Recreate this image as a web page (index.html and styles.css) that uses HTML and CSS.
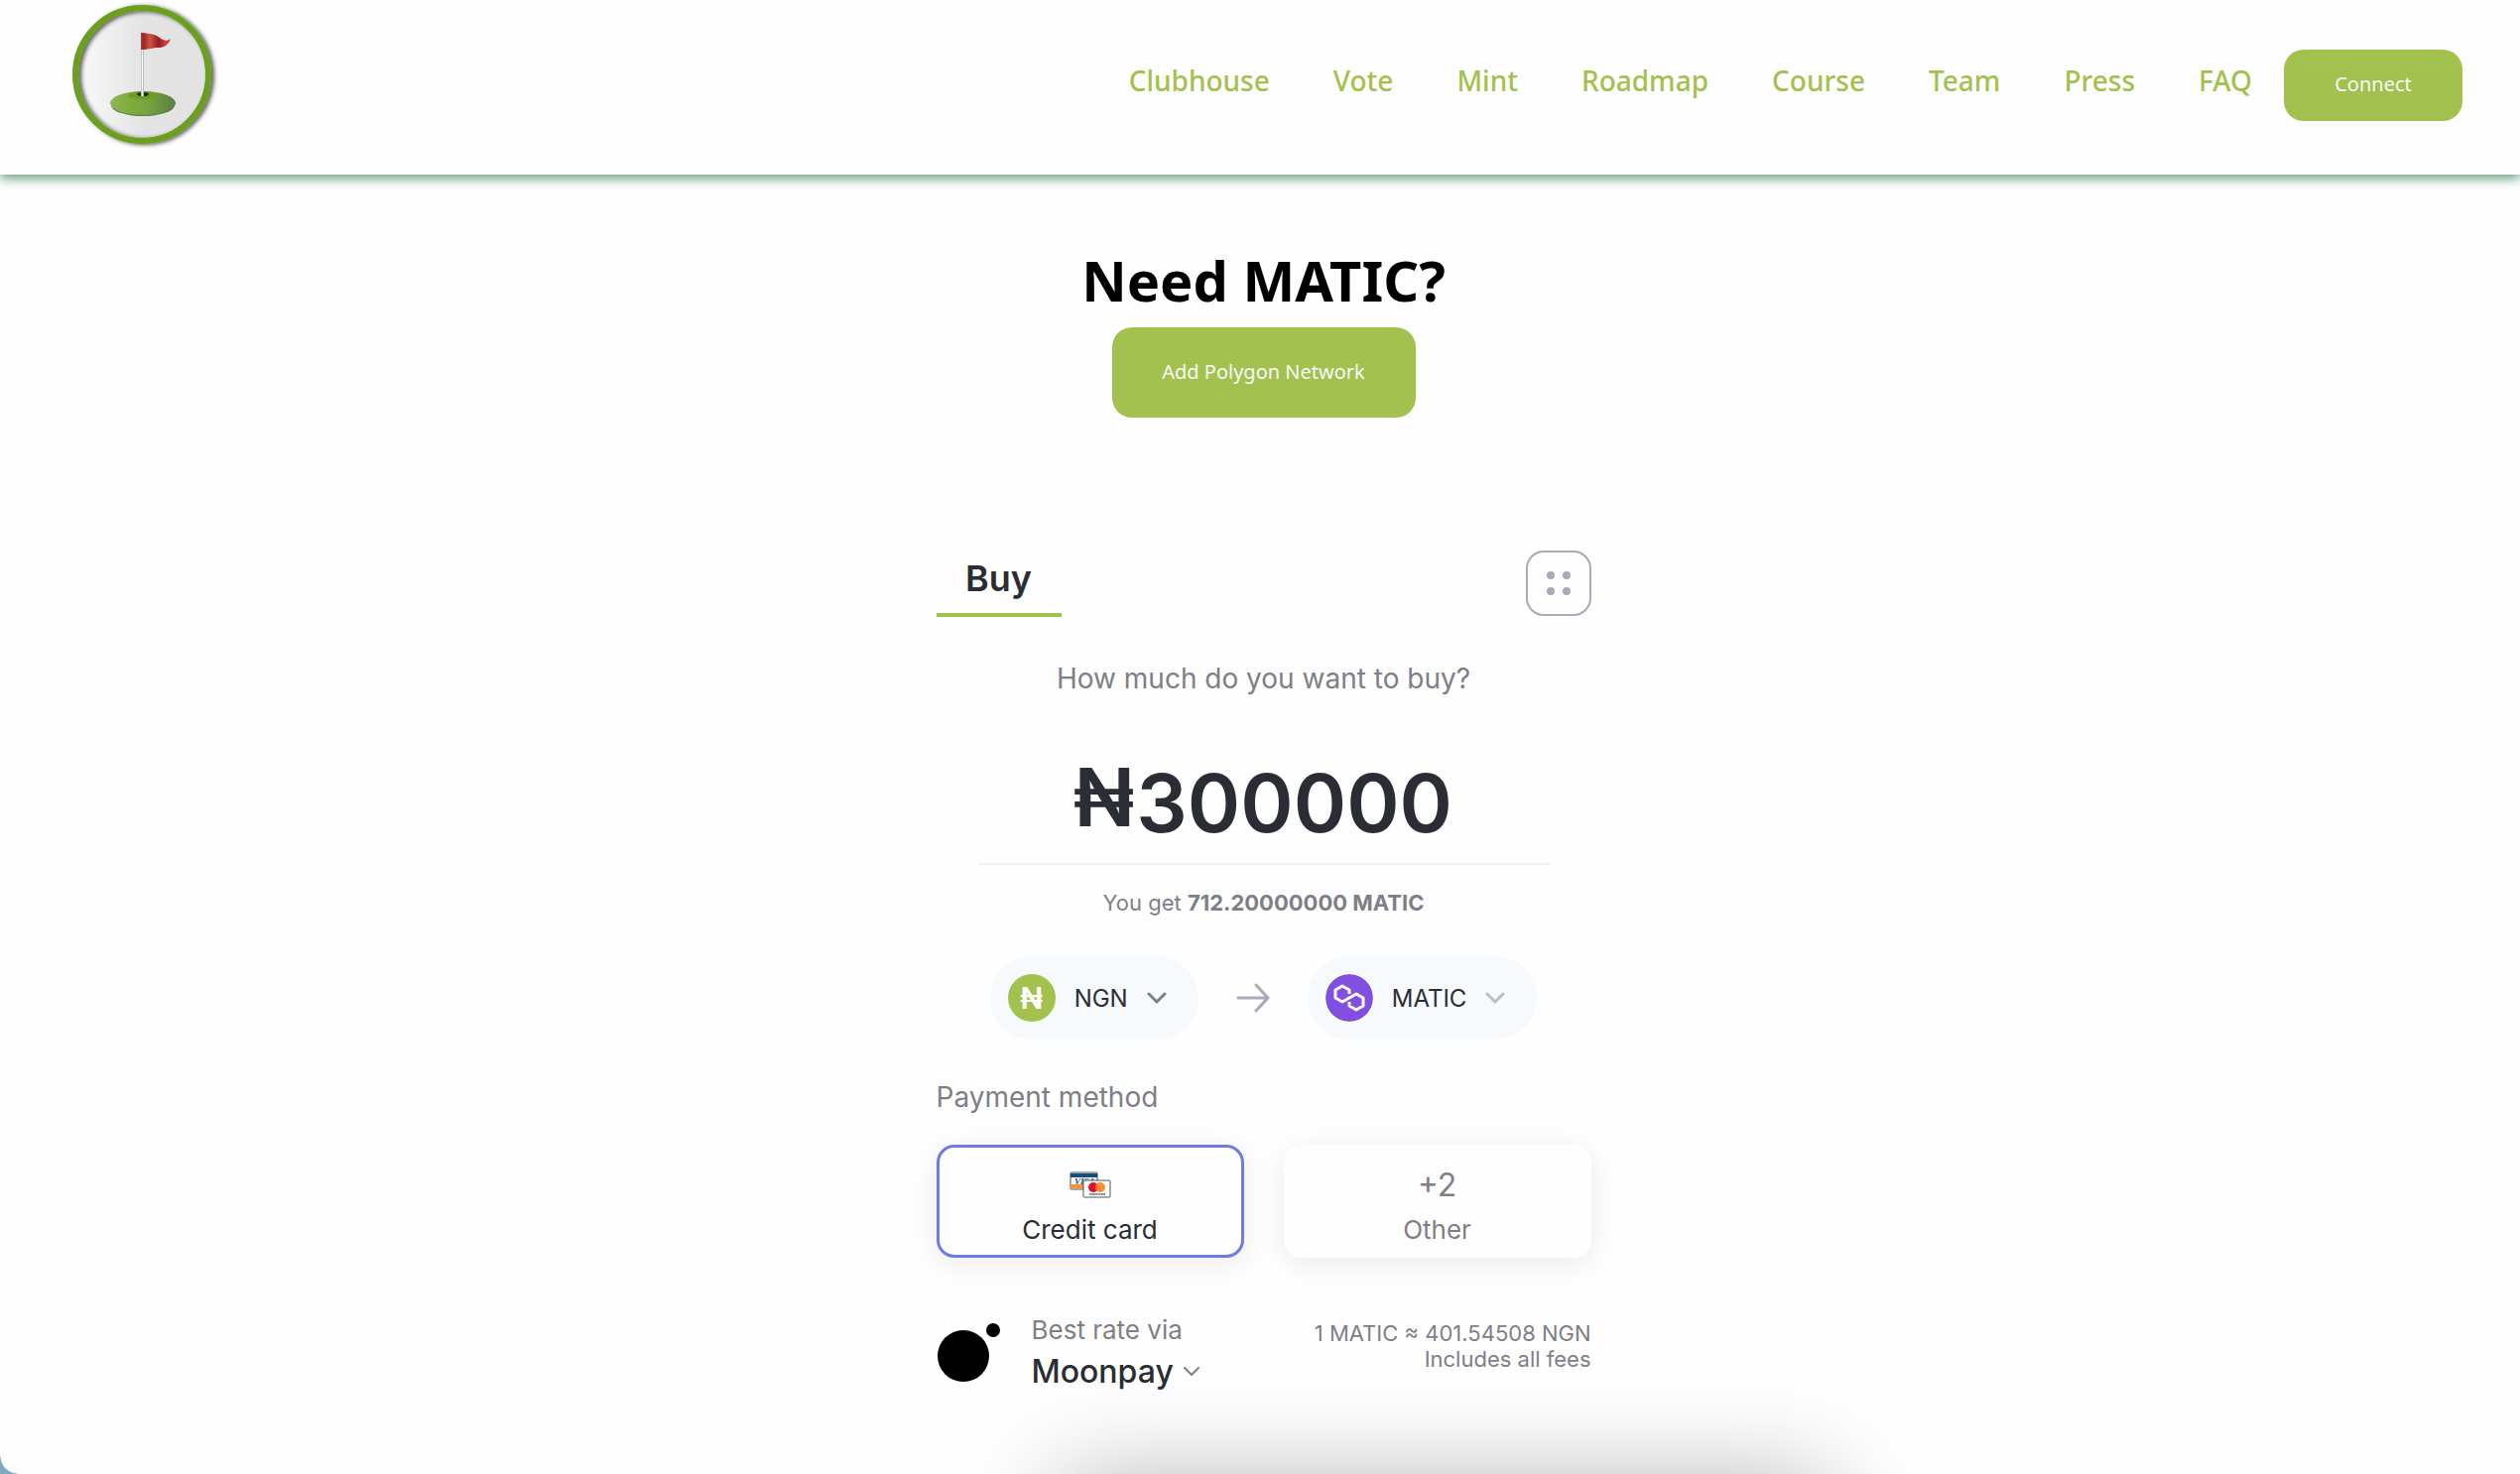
FILE: index.html
```html
<!DOCTYPE html>
<html lang="en">
<head>
  <meta charset="utf-8">
  <title>Need MATIC?</title>
  <link rel="stylesheet" href="styles.css">
</head>
<body>
  <header class="navbar">
    <a href="#" class="logo" aria-label="Home">
      <svg width="160" height="160" viewBox="0 0 160 160">
        <defs>
          <linearGradient id="bg"><stop offset="0" stop-color="#fafafa"/><stop offset=".5" stop-color="#e4e4e4"/><stop offset="1" stop-color="#e3e3e3"/></linearGradient>
          <linearGradient id="green"><stop offset="0" stop-color="#8fb85a"/><stop offset=".3" stop-color="#80ab3c"/><stop offset=".55" stop-color="#7aa53c"/><stop offset="1" stop-color="#587f48"/></linearGradient>
          <linearGradient id="flag"><stop offset="0" stop-color="#b8392f"/><stop offset=".1" stop-color="#932a25"/><stop offset=".3" stop-color="#cf5440"/><stop offset=".6" stop-color="#8f2028"/><stop offset=".85" stop-color="#dc4038"/><stop offset="1" stop-color="#b8332f"/></linearGradient>
          <linearGradient id="pole"><stop offset="0" stop-color="#aaa"/><stop offset=".5" stop-color="#fff"/><stop offset="1" stop-color="#999"/></linearGradient>
          <filter id="drop" x="-20%" y="-20%" width="140%" height="140%"><feDropShadow dx="3" dy="1" stdDeviation="2" flood-color="#000" flood-opacity=".65"/></filter>
        </defs>
        <circle cx="80" cy="75" r="66" fill="url(#bg)"/>
        <circle cx="80" cy="75" r="67" fill="none" stroke="#6ba01f" stroke-width="6" filter="url(#drop)"/>
        <ellipse cx="81" cy="106" rx="32" ry="11" fill="#55803a"/>
        <ellipse cx="81" cy="104" rx="33" ry="12" fill="url(#green)"/>
        <ellipse cx="81" cy="96" rx="15" ry="4" fill="#6ba01f"/>
        <ellipse cx="81" cy="95" rx="6" ry="2" fill="#222"/>
        <rect x="79" y="49" width="3" height="48" fill="url(#pole)"/>
        <path d="M79 33C89 34 93 34 98 38C102 41 105 42 109 39C106 46 102 48 97 48C91 48 87 50 79 50Z" fill="url(#flag)"/>
      </svg>
    </a>
    <nav class="nav-links">
      <a href="#">Clubhouse</a>
      <a href="#">Vote</a>
      <a href="#">Mint</a>
      <a href="#">Roadmap</a>
      <a href="#">Course</a>
      <a href="#">Team</a>
      <a href="#">Press</a>
      <a href="#">FAQ</a>
      <button type="button" class="btn connect">Connect</button>
    </nav>
  </header>

  <main>
    <h1>Need MATIC?</h1>
    <button type="button" class="btn add-network">Add Polygon Network</button>

    <section class="widget">
      <div class="tabs">
        <button type="button" class="tab">Buy</button>
        <button type="button" class="menu" aria-label="Menu">
          <svg width="28" height="28" viewBox="0 0 28 28" fill="#a9abb8"><circle cx="6" cy="6" r="4"/><circle cx="22" cy="6" r="4"/><circle cx="6" cy="22" r="4"/><circle cx="22" cy="22" r="4"/></svg>
        </button>
      </div>

      <label class="question" for="amount">How much do you want to buy?</label>
      <div class="amount">
        <span class="symbol">₦</span><input type="text" id="amount" value="300000">
      </div>
      <p class="you-get">You get <b>712.20000000 MATIC</b></p>

      <div class="pair">
        <button type="button" class="pill">
          <span class="coin naira">₦</span>
          NGN
          <svg width="20" height="12" viewBox="0 0 20 12" fill="none" stroke="#7e7f87" stroke-width="3" stroke-linecap="round" stroke-linejoin="round"><path d="M2 2L10 10L18 2"/></svg>
        </button>
        <svg width="34" height="34" viewBox="0 0 34 34" fill="none" stroke="#a9abb8" stroke-width="3" stroke-linecap="round" stroke-linejoin="round"><path d="M2 17H32M20 4L32 17L20 30"/></svg>
        <button type="button" class="pill">
          <svg class="coin" width="48" height="48" viewBox="0 0 48 48">
            <circle cx="24" cy="24" r="24" fill="#8250e0"/>
            <path d="M24 20V16L17 12L10 16V24L17 28L31 20L38 24V32L31 36L24 32V28" fill="none" stroke="#fff" stroke-width="3" stroke-linejoin="round"/>
          </svg>
          MATIC
          <svg width="20" height="12" viewBox="0 0 20 12" fill="none" stroke="#bcbdc1" stroke-width="3" stroke-linecap="round" stroke-linejoin="round"><path d="M2 2L10 10L18 2"/></svg>
        </button>
      </div>

      <h2>Payment method</h2>
      <div class="methods">
        <button type="button" class="method selected">
          <svg width="42" height="28" viewBox="0 0 42 28">
            <rect x="1" y="1" width="27" height="17" rx="1" fill="#fff" stroke="#555"/>
            <rect x="1" y="2" width="27" height="4" fill="#0e4f7d"/>
            <rect x="1" y="13" width="27" height="4" fill="#f7962e"/>
            <text x="5" y="13" class="visa">VISA</text>
            <rect x="14" y="9" width="27" height="17" rx="1" fill="#fff" stroke="#555"/>
            <circle cx="24" cy="16" r="5" fill="#e00f2b"/>
            <circle cx="31" cy="16" r="5" fill="#f98f2d"/>
            <path d="M27 13a5 5 0 0 1 0 6a5 5 0 0 1 0-6" fill="#ee5a25"/>
            <text x="20" y="24" class="mc">mastercard</text>
          </svg>
          <span>Credit card</span>
        </button>
        <button type="button" class="method">
          <span class="more">+2</span>
          <span>Other</span>
        </button>
      </div>

      <div class="rate">
        <svg width="66" height="60" viewBox="0 0 66 60"><circle cx="27" cy="33" r="26"/><circle cx="57" cy="7" r="7"/></svg>
        <div class="provider">
          <span>Best rate via</span>
          <button type="button" class="provider-name">
            Moonpay
            <svg width="16" height="10" viewBox="0 0 16 10" fill="none" stroke="#7e7f87" stroke-width="2" stroke-linecap="round" stroke-linejoin="round"><path d="M1 1L8 8L15 1"/></svg>
          </button>
        </div>
        <p class="fees">1 MATIC ≈ 401.54508 NGN<br>Includes all fees</p>
      </div>
    </section>
  </main>

  <div class="dock"><div class="dock-shadow"></div></div>
  <div class="corner"></div>
</body>
</html>
```
FILE: styles.css
```css
* {
  box-sizing: border-box;
}

body {
  margin: 0;
  min-height: 100vh;
  position: relative;
  background: #fefefe;
  font-family: "Noto Sans", sans-serif;
}

button {
  border: none;
  background: none;
  padding: 0;
  font-family: inherit;
  cursor: pointer;
}

/* header */
.navbar {
  display: flex;
  justify-content: space-between;
  height: 176px;
  padding: 0 58px 0 63px;
  background: #fefefe;
  box-shadow: 0 4px 10px rgba(46, 117, 80, 0.7);
}

.logo svg {
  display: block;
}

.nav-links {
  display: flex;
  align-items: center;
  height: 172px;
}

.nav-links a {
  padding: 0 32px;
  color: #a3c14f;
  font-size: 28px;
  font-weight: 500;
  line-height: 40px;
  margin-bottom: 10px;
  text-decoration: none;
}

.btn {
  padding-bottom: 3px;
  background: #a3c14f;
  color: #f8f8f8;
  border-radius: 20px;
  font-size: 20px;
}

.connect {
  width: 180px;
  height: 72px;
}

/* content */
main {
  display: flex;
  flex-direction: column;
  align-items: center;
  padding: 66px 0 40px 7px;
}

h1 {
  margin: 0;
  color: #000;
  font-size: 56px;
  font-weight: 700;
  line-height: 80px;
}

.add-network {
  width: 306px;
  height: 91px;
  margin-top: 8px;
}

.widget {
  width: 660px;
  margin-top: 134px;
  color: #7e7f87;
  font-family: Inter, sans-serif;
}

.tabs {
  display: flex;
  justify-content: space-between;
  align-items: flex-start;
}

.tab {
  width: 126px;
  height: 67px;
  padding-bottom: 8px;
  border-bottom: 4px solid #a3c14f;
  color: #2a2d33;
  font-size: 36px;
  font-weight: 600;
}

.menu {
  display: flex;
  align-items: center;
  justify-content: center;
  width: 66px;
  height: 66px;
  border: 2px solid #a9abb8;
  border-radius: 18px;
}

.question {
  display: block;
  margin-top: 42px;
  font-size: 28px;
  line-height: 40px;
  text-align: center;
}

.amount {
  display: flex;
  justify-content: center;
  gap: 2px;
  width: 576px;
  height: 168px;
  margin: 0 auto;
  padding-top: 58px;
  border-bottom: 2px solid #efeff6;
  color: #2a2d33;
  font-size: 81px;
  font-weight: 600;
  line-height: 96px;
}

.symbol {
  margin-top: -6px;
}

.amount input {
  width: 320px;
  height: 96px;
  padding: 0;
  border: none;
  background: none;
  color: inherit;
  font: inherit;
}

.you-get {
  margin: 22px 0 0;
  font-size: 22px;
  line-height: 32px;
  text-align: center;
}

.pair {
  display: flex;
  align-items: center;
  justify-content: center;
  gap: 38px;
  margin-top: 38px;
}

.pill {
  display: flex;
  align-items: center;
  gap: 19px;
  height: 84px;
  padding: 0 32px 0 18px;
  border-radius: 42px;
  background: #f6fafd;
  color: #2a2d33;
  font-size: 24px;
}

.coin {
  width: 48px;
  height: 48px;
  border-radius: 50%;
}

.naira {
  background: #a3c14f;
  color: #fff;
  font-size: 30px;
  font-weight: 600;
  line-height: 48px;
  text-align: center;
}

h2 {
  margin: 38px 0 0;
  font-size: 28px;
  font-weight: 400;
  line-height: 40px;
}

.methods {
  display: grid;
  grid-template-columns: 1fr 1fr;
  gap: 40px;
  margin-top: 28px;
}

.method {
  display: flex;
  flex-direction: column;
  align-items: center;
  justify-content: space-between;
  height: 114px;
  padding: 22px 0 9px;
  border: 3px solid transparent;
  border-radius: 18px;
  background: #fefefe;
  box-shadow: 0 6px 30px rgba(0, 0, 0, 0.08);
  color: #7e7f87;
  font-size: 26px;
  line-height: 32px;
}

.method svg {
  margin-top: 2px;
}

.selected {
  border-color: #6f7cdf;
  color: #2a2d33;
}

.more {
  font-size: 32px;
}

.visa {
  fill: #0e4f7d;
  font: italic bold 9px "Liberation Serif", serif;
}

.mc {
  fill: #333;
  font: bold 3px "Liberation Sans", sans-serif;
}

.rate {
  display: flex;
  align-items: center;
  margin-top: 57px;
}

.provider {
  display: flex;
  flex-direction: column;
  margin-left: 30px;
  font-size: 26px;
  line-height: 32px;
}

.provider-name {
  display: flex;
  align-items: center;
  gap: 10px;
  margin-top: 6px;
  color: #2a2d33;
  font-size: 32px;
  font-weight: 500;
  line-height: 40px;
}

.fees {
  align-self: flex-start;
  margin: 6px 0 0 auto;
  font-size: 22px;
  line-height: 26px;
  text-align: right;
}

/* window edge */
.dock {
  position: absolute;
  left: 0;
  right: 0;
  bottom: 0;
  height: 110px;
  overflow: hidden;
  pointer-events: none;
}

.dock-shadow {
  width: 770px;
  height: 300px;
  margin: 118px 0 0 1070px;
  box-shadow: 0 0 100px rgba(0, 0, 0, 0.3);
}

.corner {
  position: absolute;
  left: 0;
  bottom: 0;
  width: 18px;
  height: 18px;
  background: radial-gradient(circle at 100% 0, transparent 17px, #7fa9c0 18px);
}
```
